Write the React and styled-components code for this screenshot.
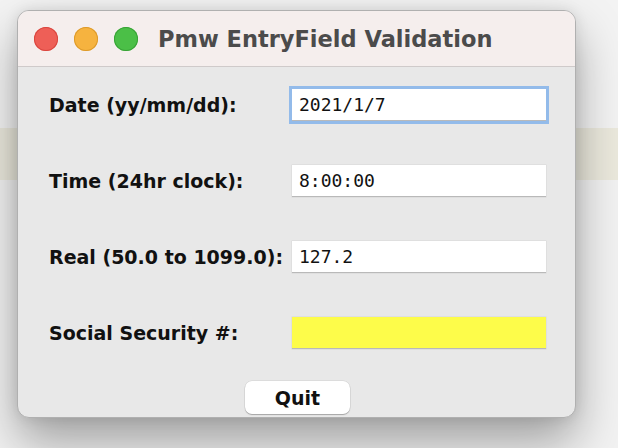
import styled, { createGlobalStyle } from "styled-components";

const GlobalStyle = createGlobalStyle`
  html, body {
    margin: 0;
    padding: 0;
  }
  body {
    width: 618px;
    height: 448px;
    overflow: hidden;
    background: linear-gradient(
      to bottom,
      #f3f3f3 0px,
      #f3f3f3 128px,
      #ebe9dd 128px,
      #ebe9dd 180px,
      #f2f2f2 180px,
      #f2f2f2 100%
    );
    font-family: "DejaVu Sans", Verdana, sans-serif;
  }
`;

const Desk = styled.div`
  padding: 10px 0 0 17px;
`;

const Window = styled.div`
  width: 559px;
  height: 408px;
  box-sizing: border-box;
  border: 1px solid #b0b0b0;
  border-radius: 12px;
  overflow: hidden;
  background: #e8e8e8;
  box-shadow: 0 24px 48px rgba(0, 0, 0, 0.34), 0 0 14px rgba(0, 0, 0, 0.1);
  display: flex;
  flex-direction: column;
`;

const TitleBar = styled.div`
  height: 55px;
  flex: none;
  background: #f5eeed;
  border-bottom: 1px solid #cfcaca;
  display: flex;
  align-items: center;
  padding-left: 16px;
`;

const Light = styled.span`
  width: 24px;
  height: 24px;
  border-radius: 50%;
  background: ${(p) => p.$color};
  box-shadow: inset 0 0 0 1px ${(p) => p.$edge};
  margin-right: 16px;
  flex: none;
`;

const Title = styled.h1`
  margin: 0 0 0 4px;
  font-size: 22.5px;
  font-weight: bold;
  color: #4b4b4b;
`;

const Body = styled.div`
  flex: 1;
  display: flex;
  flex-direction: column;
  align-items: center;
  padding: 0 29px 0 31px;
`;

const Form = styled.div`
  align-self: stretch;
  display: grid;
  grid-template-columns: 1fr 254px;
  grid-auto-rows: 76px;
  align-items: center;
`;

const Label = styled.label`
  font-size: 19px;
  font-weight: bold;
  color: #111;
`;

const Field = styled.div`
  height: 32px;
  box-sizing: border-box;
  background: ${(p) => p.$bg || "#fff"};
  border-bottom: 1px solid #b9b9b9;
  box-shadow: ${(p) =>
    p.$focus ? "0 0 0 3px #93bbea" : "0 0 0 0.5px #d6d6d6"};
  display: flex;
  align-items: center;
  padding-left: 7px;
  font-family: "DejaVu Sans Mono", "Liberation Mono", monospace;
  font-size: 18px;
  color: #111;
`;

const QuitButton = styled.button`
  margin-top: 10px;
  width: 105px;
  height: 33px;
  border: none;
  border-radius: 7px;
  background: #fff;
  box-shadow: 0 1px 1px rgba(0, 0, 0, 0.25), 0 0 0 0.5px rgba(0, 0, 0, 0.1);
  font-family: "DejaVu Sans", Verdana, sans-serif;
  font-size: 19px;
  font-weight: bold;
  color: #111;
`;

const rows = [
  { label: "Date (yy/mm/dd):", value: "2021/1/7", focus: true },
  { label: "Time (24hr clock):", value: "8:00:00" },
  { label: "Real (50.0 to 1099.0):", value: "127.2" },
  { label: "Social Security #:", value: "", bg: "#fdfc4a" },
];

export default function App() {
  return (
    <>
      <GlobalStyle />
      <Desk>
        <Window>
          <TitleBar>
            <Light $color="#ee5f57" $edge="#d9463f" />
            <Light $color="#f6b33f" $edge="#dd9a2b" />
            <Light $color="#4bbf47" $edge="#38a236" />
            <Title>Pmw EntryField Validation</Title>
          </TitleBar>
          <Body>
            <Form>
              {rows.map((r) => (
                <>
                  <Label key={r.label + "l"}>{r.label}</Label>
                  <Field key={r.label + "f"} $focus={r.focus} $bg={r.bg}>
                    {r.value}
                  </Field>
                </>
              ))}
            </Form>
            <QuitButton>Quit</QuitButton>
          </Body>
        </Window>
      </Desk>
    </>
  );
}
